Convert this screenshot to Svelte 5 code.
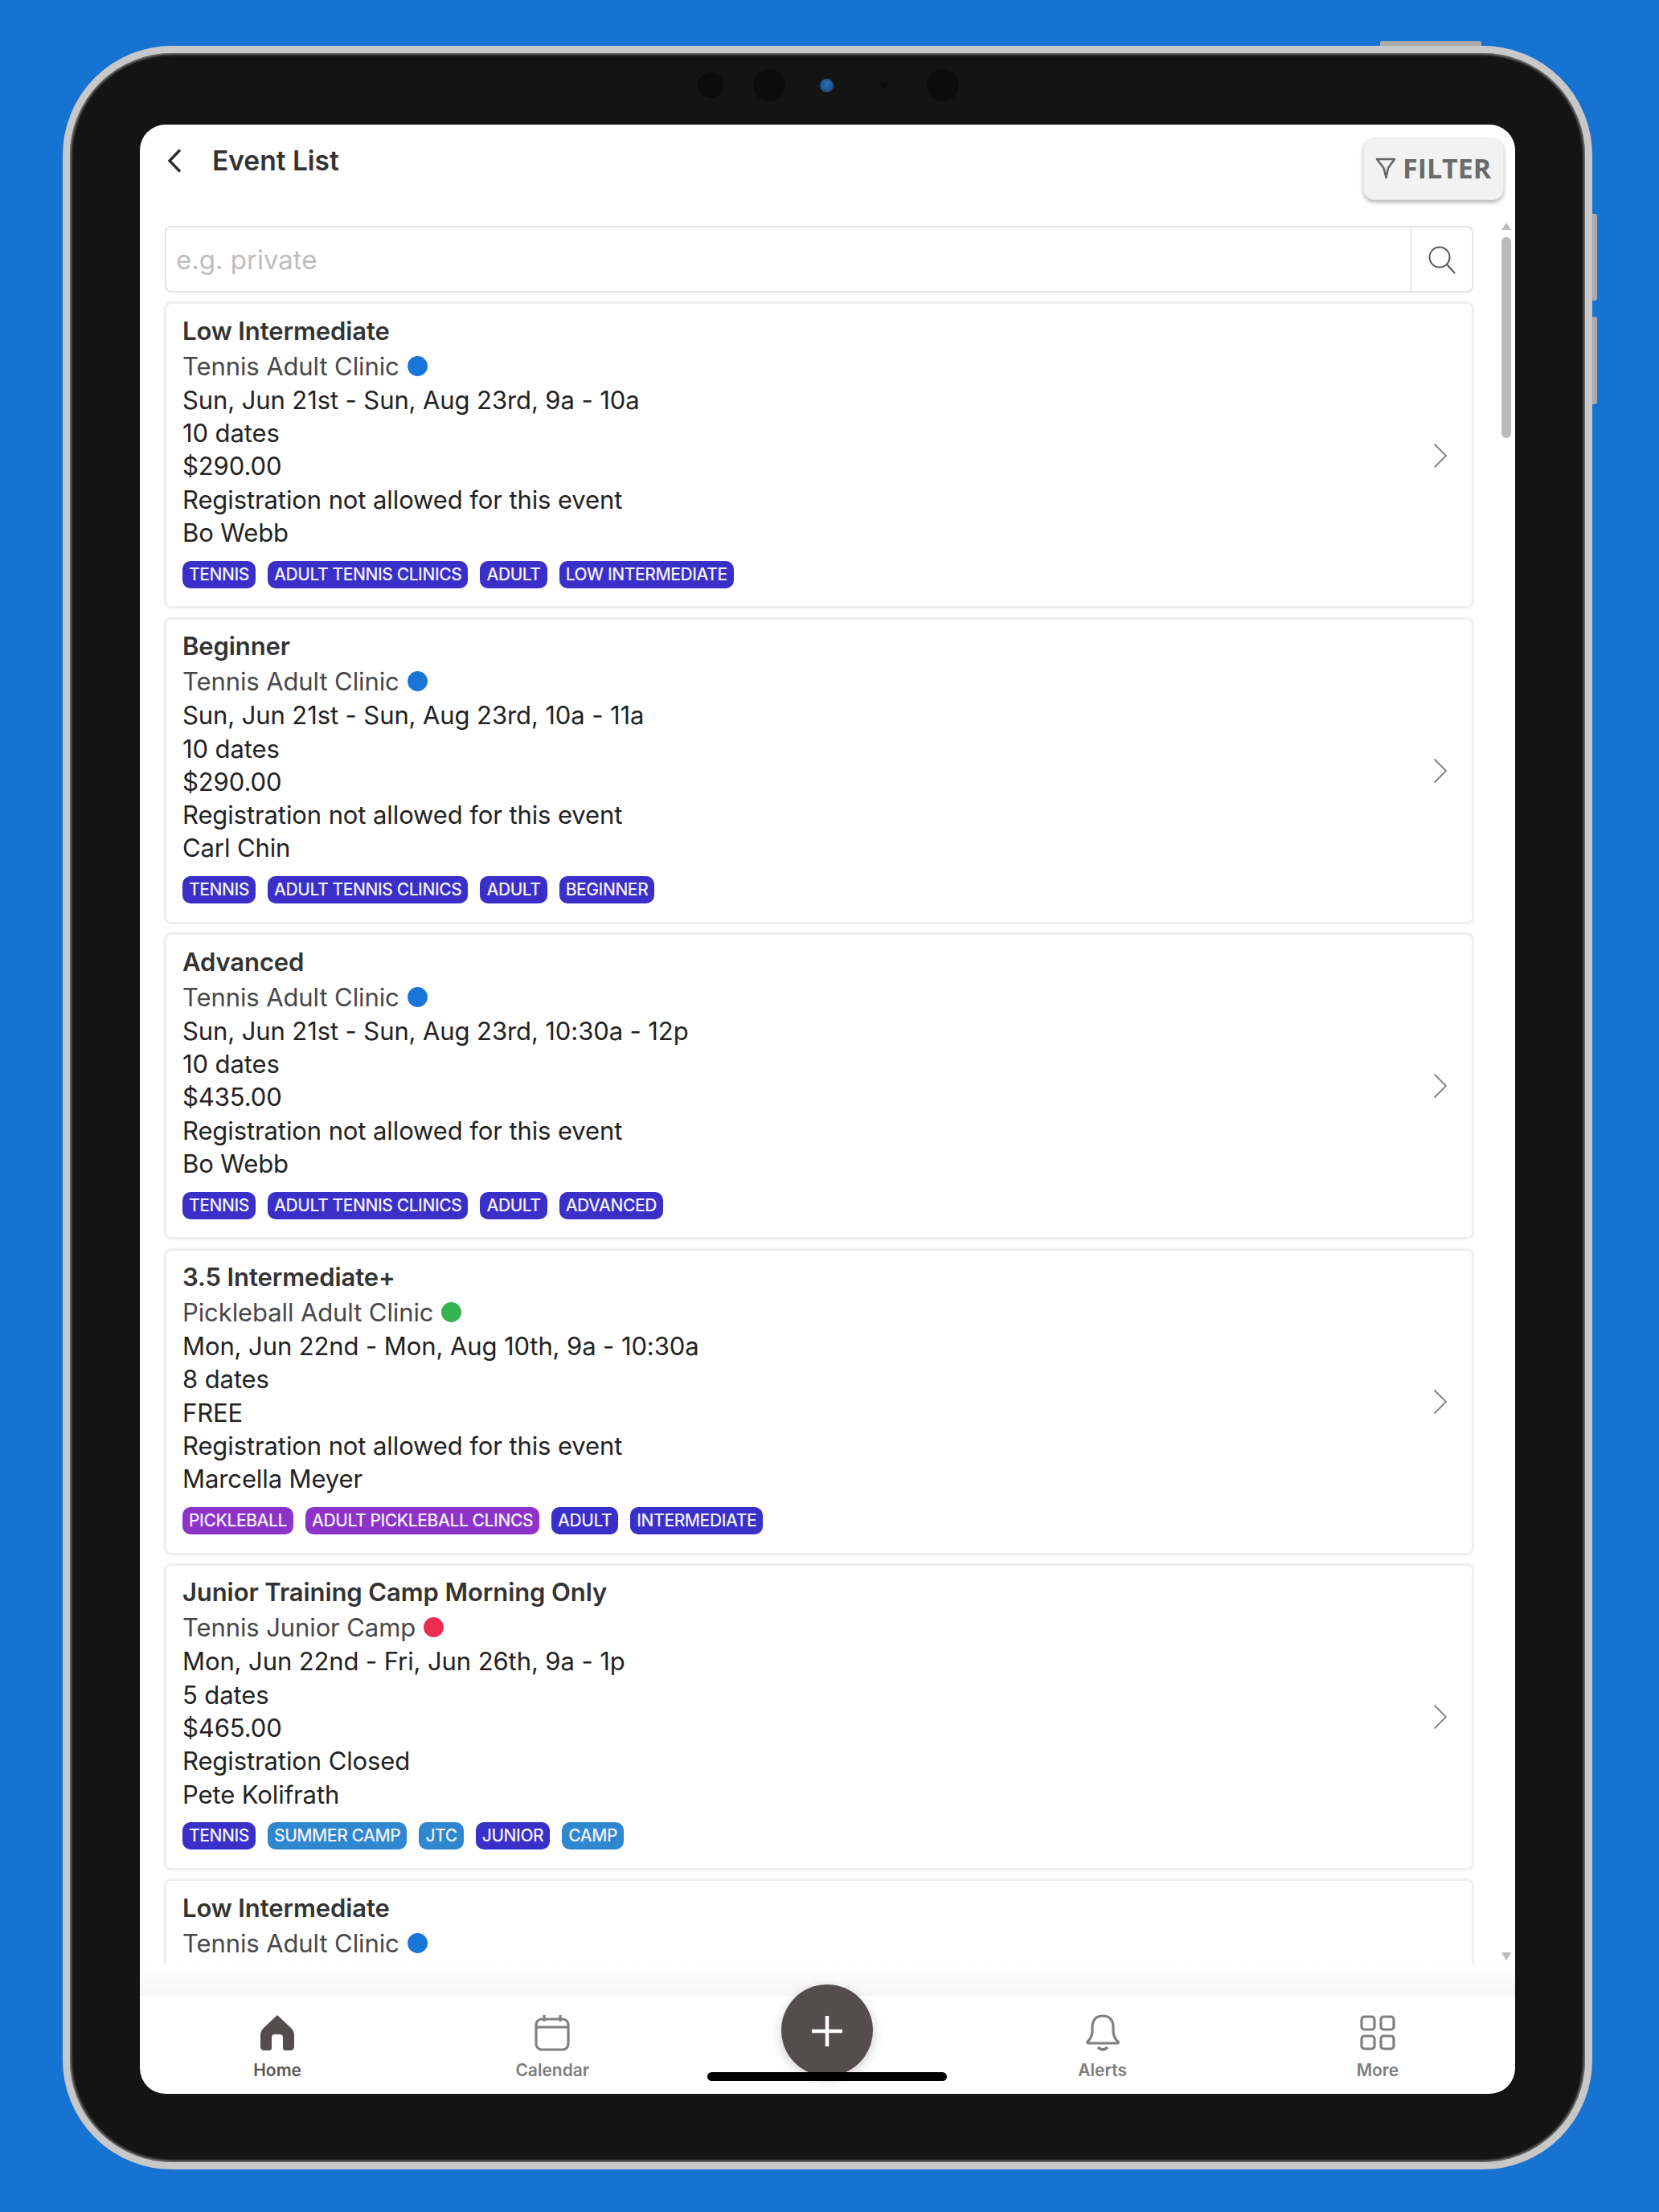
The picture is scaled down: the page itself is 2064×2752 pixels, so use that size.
<script>
    const blue = 'tag-blue';
    const purple = 'tag-purple';
    const sky = 'tag-sky';

    const events = [
        {
            title: 'Low Intermediate', sub: 'Tennis Adult Clinic', dot: 'dot-blue',
            dates: 'Sun, Jun 21st - Sun, Aug 23rd, 9a - 10a', count: '10 dates', price: '$290.00',
            reg: 'Registration not allowed for this event', coach: 'Bo Webb',
            tags: [['TENNIS', blue], ['ADULT TENNIS CLINICS', blue], ['ADULT', blue], ['LOW INTERMEDIATE', blue]]
        },
        {
            title: 'Beginner', sub: 'Tennis Adult Clinic', dot: 'dot-blue',
            dates: 'Sun, Jun 21st - Sun, Aug 23rd, 10a - 11a', count: '10 dates', price: '$290.00',
            reg: 'Registration not allowed for this event', coach: 'Carl Chin',
            tags: [['TENNIS', blue], ['ADULT TENNIS CLINICS', blue], ['ADULT', blue], ['BEGINNER', blue]]
        },
        {
            title: 'Advanced', sub: 'Tennis Adult Clinic', dot: 'dot-blue',
            dates: 'Sun, Jun 21st - Sun, Aug 23rd, 10:30a - 12p', count: '10 dates', price: '$435.00',
            reg: 'Registration not allowed for this event', coach: 'Bo Webb',
            tags: [['TENNIS', blue], ['ADULT TENNIS CLINICS', blue], ['ADULT', blue], ['ADVANCED', blue]]
        },
        {
            title: '3.5 Intermediate+', sub: 'Pickleball Adult Clinic', dot: 'dot-green',
            dates: 'Mon, Jun 22nd - Mon, Aug 10th, 9a - 10:30a', count: '8 dates', price: 'FREE',
            reg: 'Registration not allowed for this event', coach: 'Marcella Meyer',
            tags: [['PICKLEBALL', purple], ['ADULT PICKLEBALL CLINCS', purple], ['ADULT', blue], ['INTERMEDIATE', blue]]
        },
        {
            title: 'Junior Training Camp Morning Only', sub: 'Tennis Junior Camp', dot: 'dot-red',
            dates: 'Mon, Jun 22nd - Fri, Jun 26th, 9a - 1p', count: '5 dates', price: '$465.00',
            reg: 'Registration Closed', coach: 'Pete Kolifrath',
            tags: [['TENNIS', blue], ['SUMMER CAMP', sky], ['JTC', sky], ['JUNIOR', blue], ['CAMP', sky]]
        },
        {
            title: 'Low Intermediate', sub: 'Tennis Adult Clinic', dot: 'dot-blue',
            dates: 'Sun, Jun 21st - Sun, Aug 23rd, 9a - 10a', count: '10 dates', price: '$290.00',
            reg: 'Registration not allowed for this event', coach: 'Bo Webb',
            tags: [['TENNIS', blue], ['ADULT TENNIS CLINICS', blue], ['ADULT', blue], ['LOW INTERMEDIATE', blue]]
        }
    ];
</script>

<div class="device">
    <span class="hw hw-top"></span>
    <span class="hw hw-side1"></span>
    <span class="hw hw-side2"></span>

    <div class="sensors">
        <span class="lens l1"></span>
        <span class="lens l2"></span>
        <span class="lens l3"></span>
        <span class="lens l4"></span>
        <span class="lens l5"></span>
    </div>

    <div class="screen">
        <header class="top">
            <div class="heading">
                <svg class="back" viewBox="0 0 18 30" width="18" height="30">
                    <path d="M16 1.5 L3 15 L16 28.5" fill="none" stroke="#2e2e2e" stroke-width="3.4" />
                </svg>
                <h1>Event List</h1>
            </div>
            <button class="filter">
                <svg viewBox="0 0 26 28" width="26" height="28">
                    <path d="M2 3 H24 L16 14 L13.5 26 L10.5 14 Z" fill="none" stroke="#666" stroke-width="2.6" stroke-linejoin="round" />
                </svg>
                <span>FILTER</span>
            </button>
        </header>

        <div class="body">
            <div class="list">
                <div class="search">
                    <div class="placeholder">e.g. private</div>
                    <div class="search-btn">
                        <svg viewBox="0 0 36 36" width="36" height="36">
                            <circle cx="15" cy="15" r="12.5" fill="none" stroke="#555" stroke-width="2" />
                            <path d="M24 24 L34 35" fill="none" stroke="#555" stroke-width="2" />
                        </svg>
                    </div>
                </div>

                {#each events as ev}
                    <article class="card">
                        <div class="info">
                            <div class="title">{ev.title}</div>
                            <div class="sub">{ev.sub}<span class="dot {ev.dot}"></span></div>
                            <div class="line">{ev.dates}</div>
                            <div class="line">{ev.count}</div>
                            <div class="line">{ev.price}</div>
                            <div class="line">{ev.reg}</div>
                            <div class="line">{ev.coach}</div>
                            <div class="tags">
                                {#each ev.tags as t}
                                    <span class="tag {t[1]}">{t[0]}</span>
                                {/each}
                            </div>
                        </div>
                        <svg class="chev" viewBox="0 0 18 32" width="18" height="32">
                            <path d="M1.5 1.5 L16 16 L1.5 30.5" fill="none" stroke="#808080" stroke-width="1.8" />
                        </svg>
                    </article>
                {/each}
            </div>

            <div class="scroll">
                <span class="arrow up"></span>
                <span class="thumb"></span>
                <span class="arrow down"></span>
            </div>
        </div>

        <div class="fade"></div>

        <nav class="tabs">
            <div class="tab active">
                <svg viewBox="0 0 44 46" width="44" height="46">
                    <path d="M22 1 L39 17 Q43 21 43 26 V40 Q43 45 38 45 H32 Q29 45 29 42 V29 Q29 25 25 25 H19 Q15 25 15 29 V42 Q15 45 12 45 H6 Q1 45 1 40 V26 Q1 21 5 17 Z" fill="#544d4d" />
                </svg>
                <span>Home</span>
            </div>
            <div class="tab">
                <svg viewBox="0 0 44 46" width="44" height="46" fill="none" stroke="#808080" stroke-width="3.2">
                    <rect x="2" y="6" width="40" height="38" rx="7" />
                    <path d="M2 16 H42 M12 1 V9 M32 1 V9" />
                </svg>
                <span>Calendar</span>
            </div>
            <div class="tab"></div>
            <div class="tab">
                <svg viewBox="0 0 44 46" width="44" height="46" fill="none" stroke="#808080" stroke-width="3.2">
                    <path d="M3 34 Q8 30 9 22 V15 Q10 2 22 2 Q34 2 35 15 V22 Q36 30 41 34 Q42 36 39 36 H5 Q2 36 3 34 Z" stroke-linejoin="round" />
                    <path d="M16 41 Q22 47 28 41" stroke-width="3.6" />
                </svg>
                <span>Alerts</span>
            </div>
            <div class="tab">
                <svg viewBox="0 0 44 46" width="44" height="46" fill="none" stroke="#808080" stroke-width="3.2">
                    <rect x="2" y="3" width="16" height="16" rx="3.5" />
                    <rect x="26" y="3" width="16" height="16" rx="3.5" />
                    <rect x="2" y="27" width="16" height="16" rx="3.5" />
                    <rect x="26" y="27" width="16" height="16" rx="3.5" />
                </svg>
                <span>More</span>
            </div>

            <button class="fab" aria-label="Add">
                <svg viewBox="0 0 40 40" width="40" height="40">
                    <path d="M20 1 V39 M1 20 H39" stroke="#fff" stroke-width="4.5" />
                </svg>
            </button>
            <span class="home-bar"></span>
        </nav>
    </div>
</div>

<style>
    :global(body) {
        margin: 0;
        background: #1773d1;
    }

    .device {
        position: relative;
        box-sizing: border-box;
        width: 1903px;
        height: 2642px;
        margin: 57px 0 93px 78px;
        padding: 0 87px 85px 87px;
        background: #141414;
        border: 9px solid #c8c8c8;
        border-radius: 136px;
        box-shadow: inset 0 0 3px 2px #777;
        font-family: Inter, "Liberation Sans", sans-serif;
    }

    .hw {
        position: absolute;
        background: #aaa;
    }

    .hw-top {
        left: 1630px;
        top: -15px;
        width: 126px;
        height: 6px;
        border-radius: 3px 3px 0 0;
    }

    .hw-side1,
    .hw-side2 {
        left: 1894px;
        width: 6px;
        border-radius: 0 3px 3px 0;
    }

    .hw-side1 {
        top: 200px;
        height: 108px;
    }

    .hw-side2 {
        top: 328px;
        height: 109px;
    }

    .sensors {
        display: flex;
        align-items: center;
        height: 78px;
        margin-bottom: 11px;
        padding-top: 2px;
        box-sizing: border-box;
        padding-left: 694px;
    }

    .lens {
        flex: none;
        border-radius: 50%;
        background: #0b0c0b;
    }

    .l1 {
        width: 32px;
        height: 32px;
    }

    .l2 {
        width: 40px;
        height: 40px;
        margin-left: 37px;
    }

    .l3 {
        width: 17px;
        height: 17px;
        margin-left: 43px;
        background: radial-gradient(circle at 50% 40%, #2f72b8, #163a66);
    }

    .l4 {
        width: 8px;
        height: 8px;
        margin-left: 59px;
    }

    .l5 {
        width: 40px;
        height: 40px;
        margin-left: 49px;
    }

    .screen {
        display: flex;
        flex-direction: column;
        height: 2450px;
        background: #fff;
        border-radius: 32px;
        overflow: hidden;
    }

    .top {
        display: flex;
        flex: none;
        justify-content: space-between;
        align-items: flex-start;
        height: 126px;
        padding: 17px 14px 0 34px;
        box-sizing: border-box;
    }

    .heading {
        display: flex;
        align-items: center;
        gap: 38px;
        height: 56px;
    }

    h1 {
        margin: 0;
        font-size: 33.5px;
        font-weight: 600;
        color: #333;
    }

    .filter {
        display: flex;
        align-items: center;
        gap: 8px;
        box-sizing: border-box;
        width: 175px;
        height: 77px;
        padding: 0 0 3px 14px;
        background: #f2f2f2;
        border: 1px solid #e6e6e6;
        border-radius: 14px;
        box-shadow: 0 3px 5px rgba(0, 0, 0, 0.28);
        font-family: "Open Sans", Inter, sans-serif;
        font-size: 34px;
        font-weight: 700;
        color: #6b6b6b;
    }

    .body {
        display: flex;
        flex: none;
        height: 2164px;
    }

    .list {
        flex: none;
        box-sizing: border-box;
        width: 1632px;
        margin-left: 29px;
        padding: 0 2px;
        overflow: hidden;
        display: flex;
        flex-direction: column;
        gap: 12.4px;
    }

    .search {
        display: flex;
        flex: none;
        box-sizing: border-box;
        height: 83px;
        border: 2px solid #e4e4e4;
        border-radius: 8px;
    }

    .placeholder {
        flex: 1;
        padding-left: 12px;
        font-size: 33px;
        line-height: 80px;
        color: #bdbdbd;
    }

    .search-btn {
        display: flex;
        align-items: center;
        justify-content: center;
        width: 75px;
        border-left: 1px solid #d8d8d8;
    }

    .card {
        display: flex;
        flex: none;
        justify-content: space-between;
        align-items: flex-start;
        box-sizing: border-box;
        height: 380px;
        padding: 11.5px 30px 0 20px;
        border: 2px solid #eeeeee;
        border-radius: 8px;
        box-shadow: 0 0 3px rgba(0, 0, 0, 0.16);
    }

    .chev {
        align-self: center;
        margin-top: -11px;
    }

    .info {
        font-size: 31px;
        letter-spacing: -0.1px;
        line-height: 41.3px;
        color: #222;
    }

    .title {
        font-weight: 600;
        line-height: 44px;
        color: #333;
    }

    .sub {
        display: flex;
        align-items: center;
        gap: 10px;
        line-height: 43px;
        color: #484848;
    }

    .dot {
        width: 25px;
        height: 25px;
        border-radius: 50%;
    }

    .dot-blue {
        background: #1976d8;
    }

    .dot-green {
        background: #35b254;
    }

    .dot-red {
        background: #e92c50;
    }

    .tags {
        display: flex;
        gap: 15px;
        margin-top: 14.5px;
    }

    .tag {
        padding: 0 8px;
        border-radius: 10px;
        font-size: 21px;
        letter-spacing: -0.4px;
        font-weight: 500;
        line-height: 34px;
        color: #f2f2ff;
    }

    .tag-blue {
        background: #3a2fc8;
    }

    .tag-purple {
        background: #8e33c9;
    }

    .tag-sky {
        background: #2f87cf;
    }

    .scroll {
        display: flex;
        flex-direction: column;
        align-items: center;
        width: 12px;
        margin-left: 33px;
        position: relative;
    }

    .arrow {
        width: 0;
        height: 0;
        border-left: 6px solid transparent;
        border-right: 6px solid transparent;
    }

    .up {
        margin-top: -4px;
        border-bottom: 9px solid #bbb;
    }

    .thumb {
        width: 12px;
        height: 250px;
        margin-top: 9px;
        background: #bbb;
        border-radius: 6px;
    }

    .down {
        margin-top: auto;
        margin-bottom: 6px;
        border-top: 10px solid #bbb;
    }

    .fade {
        flex: none;
        height: 38px;
        background: linear-gradient(#fff, #f5f5f5);
    }

    .tabs {
        position: relative;
        display: grid;
        flex: none;
        grid-template-columns: repeat(5, 1fr);
        height: 122px;
    }

    .tab {
        display: flex;
        flex-direction: column;
        align-items: center;
        padding-top: 23px;
        gap: 11px;
        font-size: 21px;
        font-weight: 600;
        line-height: 26px;
        color: #7d7d7d;
    }

    .tab.active {
        color: #5c5656;
    }

    .fab {
        position: absolute;
        left: 798px;
        top: -14px;
        display: flex;
        align-items: center;
        justify-content: center;
        width: 114px;
        height: 114px;
        padding: 2px 0 0;
        background: #544d4d;
        border: none;
        border-radius: 50%;
        box-shadow: 0 4px 14px rgba(0, 0, 0, 0.2);
    }

    .home-bar {
        position: absolute;
        left: 706px;
        top: 95px;
        width: 298px;
        height: 11px;
        background: #000;
        border-radius: 6px;
    }
</style>
